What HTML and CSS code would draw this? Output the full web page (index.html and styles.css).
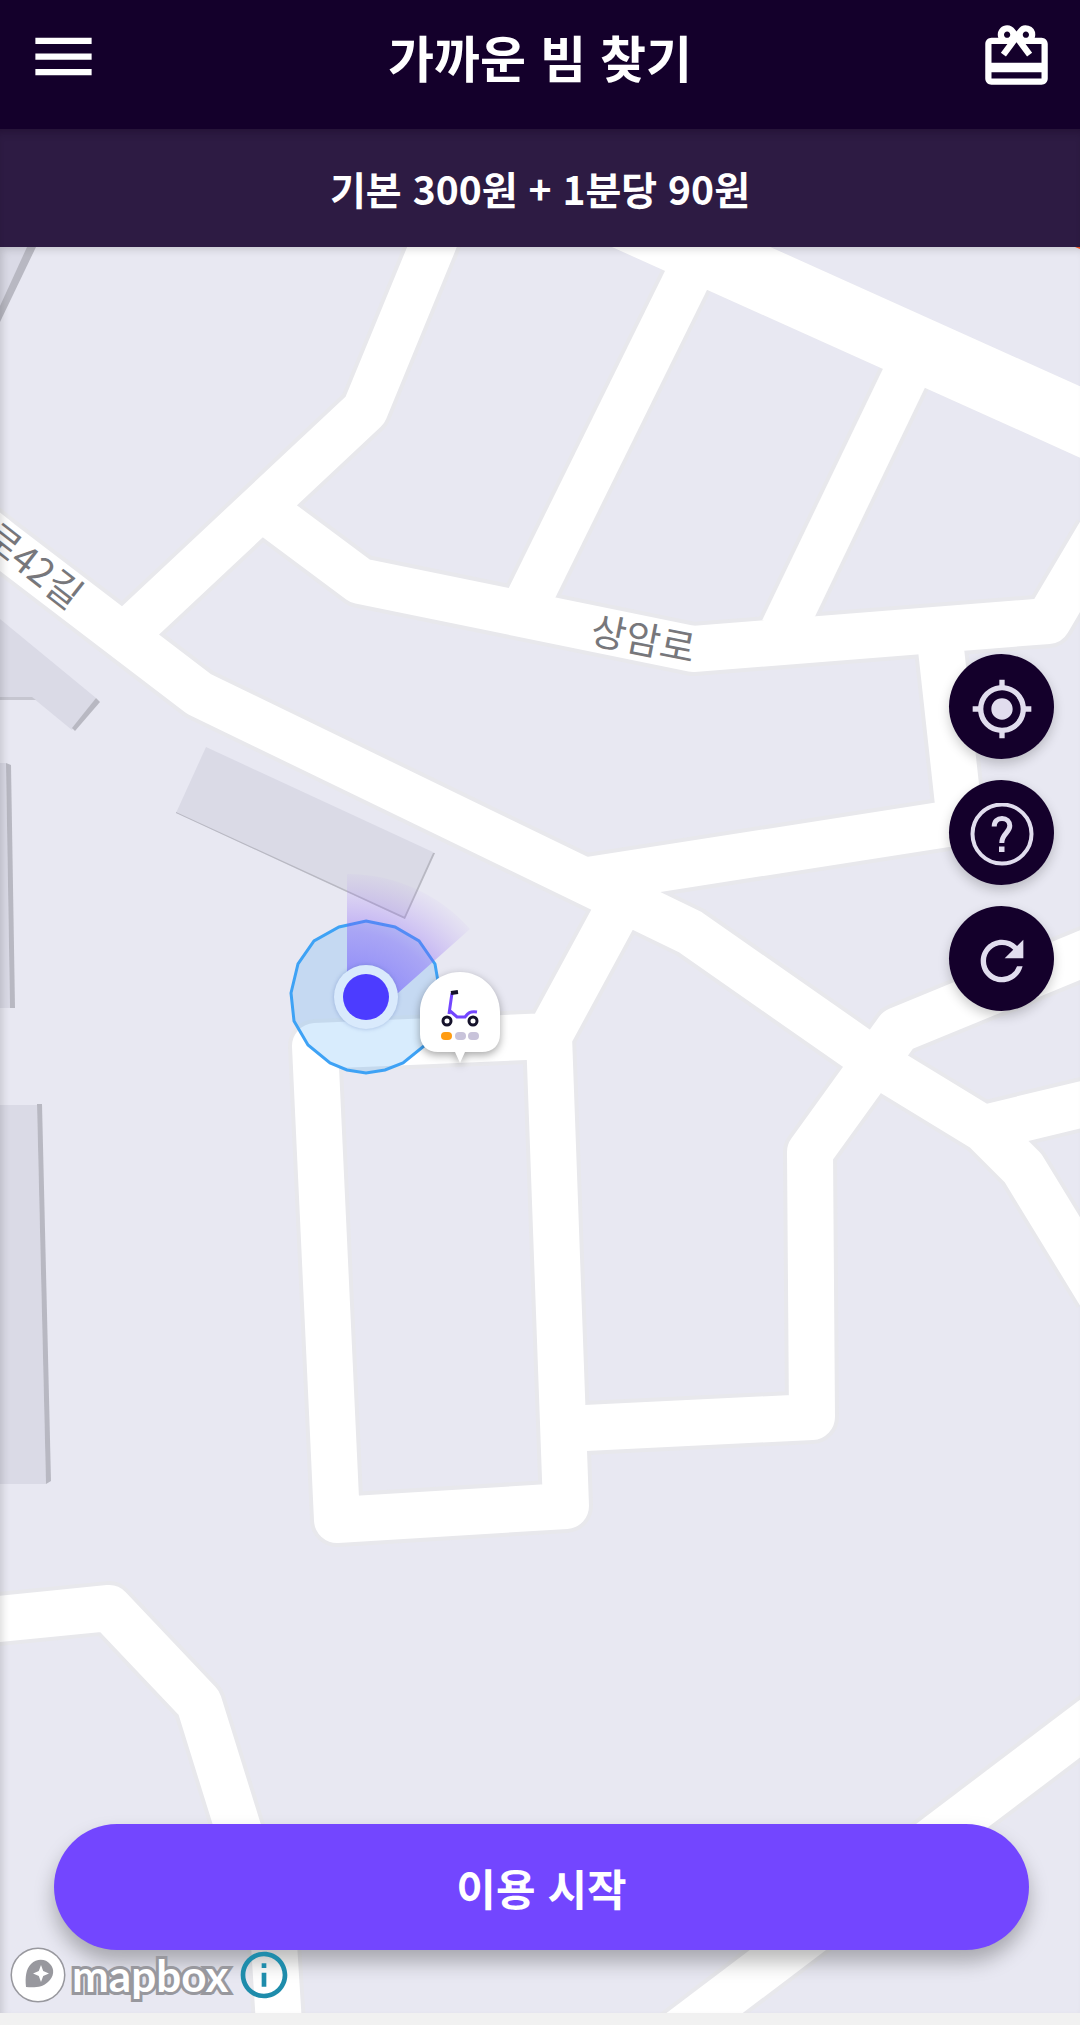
FILE: index.html
```
<!DOCTYPE html>
<html lang="ko">
  <head>
    <title>가까운 빔 찾기</title>
    <meta charset="utf-8" />
    <meta name="viewport" content="width=device-width, initial-scale=1" />
    <link rel="stylesheet" href="styles.css">
  </head>
  <body>
    <header class="topbar">
      <button class="icon-button" aria-label="메뉴">
        <svg viewBox="0 0 24 24"><path d="M3 18h18v-2H3v2zm0-5h18v-2H3v2zm0-7v2h18V6H3z" /></svg>
      </button>
      <h1 class="title">가까운 빔 찾기</h1>
      <button class="icon-button" aria-label="선물">
        <svg viewBox="0 0 24 24"><path d="M20 6h-2.18c.11-.31.18-.65.18-1a2.996 2.996 0 0 0-5.5-1.65l-.5.67-.5-.68C10.96 2.54 10.05 2 9 2 7.34 2 6 3.34 6 5c0 .35.07.69.18 1H4c-1.11 0-1.99.89-1.99 2L2 19c0 1.11.89 2 2 2h16c1.11 0 2-.89 2-2V8c0-1.11-.89-2-2-2zm-5-2c.55 0 1 .45 1 1s-.45 1-1 1-1-.45-1-1 .45-1 1-1zM9 4c.55 0 1 .45 1 1s-.45 1-1 1-1-.45-1-1 .45-1 1-1zm11 15H4v-2h16v2zm0-5H4V8h5.08L7 10.83 8.62 12 11 8.76l1-1.36 1 1.36L15.38 12 17 10.83 14.92 8H20v6z" /></svg>
      </button>
    </header>

    <p class="price">기본 300원 + 1분당 90원</p>

    <main class="map">
      <svg class="map-canvas" viewBox="0 247 1080 1766" preserveAspectRatio="xMidYMid slice">
        <defs>
          <radialGradient id="heading" gradientUnits="userSpaceOnUse" cx="347" cy="1038" r="164">
            <stop offset="0.3" stop-color="#5a46ff" stop-opacity="0.55" />
            <stop offset="0.65" stop-color="#7a50fa" stop-opacity="0.38" />
            <stop offset="1" stop-color="#a06ef0" stop-opacity="0.04" />
          </radialGradient>
          <g id="roads">
            <path class="wide" d="M560 188L1120 440" />
            <path d="M-30 518L0 542L199 694L690 932L889 1071L984 1129L1023 1168L1100 1294" />
            <path d="M440 227L432 247L365 410L126 634" />
            <path d="M262 508L360 581L693 649L1048 621L1100 533" />
            <path d="M700 252L526 605" />
            <path d="M918 349L783 630" />
            <path d="M940 640L960 822L582 881" />
            <path d="M620 905L549 1036L315 1046L337 1520L566 1506L549 1036" />
            <path d="M565 1429L812 1417L810 1152L898 1030L1100 947" />
            <path d="M984 1128L1100 1100" />
            <path d="M-20 1621L109 1608L199 1703L274 1944L280 2040" />
            <path d="M665 2043L1106 1709" />
          </g>
        </defs>

        <use href="#roads" class="road-casing" />
        <use href="#roads" class="road" />

        <!-- buildings -->
        <g class="building">
          <path d="M0 247H28L0 308Z" />
          <path d="M0 619L96 698L72 730L33 698H0Z" />
          <path d="M206 747L435 853L405 919L176 813Z" />
          <path d="M0 763H6L10 1008H0Z" />
          <path d="M0 1105H37L46 1484H0Z" />
        </g>
        <g class="wall">
          <path d="M27 247H36L0 322V306Z" />
          <path d="M96 698L100 702L75 731L72 728Z" />
          <path d="M6 763L11 765L15 1008H10Z" />
          <path d="M37 1104H42L51 1481L46 1484Z" />
          <path class="thin" d="M0 697H32L36 700H0Z" />
          <path d="M435 853L405 919L404 917L433 853Z" />
          <path d="M405 919L176 813L176 812L405 917Z" />
        </g>

        <path class="poi" d="M1075 247H1080V249Z" />

        <text class="road-name" text-anchor="end" transform="translate(69 611) rotate(38)">로42길</text>
        <text class="road-name" transform="translate(589 643) rotate(11)">상암로</text>

        <!-- current location -->
        <path class="accuracy" d="M366 921L395 927L419 941L435 964L440 993L437 1021L424 1046L403 1063L385 1070L366 1073L347 1070L330 1063L308 1045L294 1021L291 993L298 964L314 941L339 927Z" />
        <path fill="url(#heading)" d="M347 874A164 164 0 0 1 470 929L398 993L366 1000L347 980Z" />
        <circle class="dot-ring" cx="366" cy="997" r="32" />
        <circle class="dot" cx="366" cy="997" r="23" />

        <!-- scooter pin -->
        <g class="pin">
          <path d="M420 1012C420 990 438 972 460 972S500 990 500 1012V1034C500 1045 493 1052 482 1052H465L460 1063L455 1052H438C427 1052 420 1045 420 1034Z" />
        </g>
        <g class="scooter">
          <path class="frame" d="M452 993L449 1014M449 1010L457 1017H465C468 1013 470 1011 477 1012" />
          <path class="grip" d="M451 993L458 992" />
          <circle cx="447" cy="1021" r="4" />
          <circle cx="473" cy="1021" r="4" />
        </g>
        <rect class="battery full" x="441" y="1032" width="11" height="8" rx="4" />
        <rect class="battery" x="455" y="1032" width="11" height="8" rx="4" />
        <rect class="battery" x="468" y="1032" width="11" height="8" rx="4" />
      </svg>

      <div class="map-controls">
        <button class="fab" aria-label="현재 위치">
          <svg viewBox="0 0 24 24"><path d="M12 8c-2.21 0-4 1.79-4 4s1.79 4 4 4 4-1.79 4-4-1.79-4-4-4zm8.94 3A8.994 8.994 0 0 0 13 3.06V1h-2v2.06A8.994 8.994 0 0 0 3.06 11H1v2h2.06A8.994 8.994 0 0 0 11 20.94V23h2v-2.06A8.994 8.994 0 0 0 20.94 13H23v-2h-2.06zM12 19c-3.87 0-7-3.13-7-7s3.13-7 7-7 7 3.13 7 7-3.13 7-7 7z" /></svg>
        </button>
        <button class="fab" aria-label="도움말">
          <svg viewBox="0 0 64 64">
            <circle class="line" cx="32" cy="31" r="29.5" />
            <path class="line mark" d="M24.200 23.500C24.200 18.500 27.500 15.400 32 15.400C36.600 15.400 39.800 18.500 39.800 22.800C39.800 29.800 31.800 30.500 31.800 40" />
            <path d="M29 43.500h5.500v5.500H29z" />
          </svg>
        </button>
        <button class="fab" aria-label="새로고침">
          <svg viewBox="0 0 24 24"><path d="M17.65 6.35A7.958 7.958 0 0 0 12 4c-4.42 0-7.99 3.58-7.99 8s3.57 8 7.99 8c3.73 0 6.84-2.55 7.73-6h-2.08A5.99 5.99 0 0 1 12 18c-3.31 0-6-2.69-6-6s2.69-6 6-6c1.66 0 3.14.69 4.22 1.78L13 11h7V4l-2.35 2.35z" /></svg>
        </button>
      </div>

      <button class="start-button">이용 시작</button>

      <div class="attribution">
        <a class="mapbox" href="https://www.mapbox.com/">
          <svg viewBox="0 0 56 56">
            <circle class="badge" cx="28" cy="28" r="26" />
            <path class="leaf" d="M16 40C15 30 16 22 21 17C27 11 36 12 40 17C45 22 44 30 38 35C33 40 25 41 16 40Z" />
            <path class="star" d="M31 18L33.200 24L39 26.500L33.200 29L31 35L28.800 29L23 26.500L28.800 24Z" />
          </svg>
          <span>mapbox</span>
        </a>
        <button class="info-button" aria-label="지도 정보">
          <svg viewBox="0 0 24 24"><path d="M11 7h2v2h-2zm0 4h2v6h-2zm1-9C6.480 2 2 6.480 2 12s4.480 10 10 10 10-4.480 10-10S17.520 2 12 2zm0 18c-4.410 0-8-3.590-8-8s3.590-8 8-8 8 3.590 8 8-3.590 8-8 8z" /></svg>
        </button>
      </div>
    </main>
  </body>
</html>
```

FILE: styles.css
```
* {
  box-sizing: border-box;
}

body {
  display: flex;
  flex-direction: column;
  min-height: 100vh;
  margin: 0;
  padding-bottom: 12px;
  font-family: "Noto Sans CJK KR", sans-serif;
  color: #fff;
  background-color: #f1f1f1;
}

button {
  padding: 0;
  border: none;
  background: none;
  color: inherit;
  font-family: inherit;
  cursor: pointer;
}

svg {
  display: block;
}

.topbar {
  display: flex;
  align-items: center;
  justify-content: space-between;
  padding: 19px 26px 35px;
  background-color: #14002b;
}

.icon-button svg {
  width: 75px;
  height: 75px;
  fill: #fff;
}

.title {
  margin: 0;
  font-size: 50px;
  font-weight: 700;
  line-height: 75px;
}

.price {
  margin: 0;
  padding: 29px 26px;
  background-color: #2d1b43;
  box-shadow: inset 0 8px 10px -6px rgba(20, 0, 30, 0.4);
  font-size: 39px;
  font-weight: 700;
  line-height: 60px;
  text-align: center;
}

.map {
  position: relative;
  flex: 1;
  min-height: 1000px;
  overflow: hidden;
  background-color: #e8e8f2;
}

/* soft edge under the price bar and along the left side */
.map::after {
  content: "";
  position: absolute;
  inset: 0;
  box-shadow: inset 4px 4px 8px -2px rgba(0, 0, 0, 0.16);
  pointer-events: none;
}

.map-canvas {
  position: absolute;
  width: 100%;
  height: 100%;
}

.road,
.road-casing {
  fill: none;
  stroke: #fff;
  stroke-width: 46px;
  stroke-linecap: butt;
  stroke-linejoin: round;
}

.road-casing {
  stroke: #e8e8ec;
  stroke-width: 54px;
}

.wide {
  stroke-width: 65px;
}

.building {
  fill: #dadae6;
}

.wall {
  fill: #b8b8c2;
}

.wall .thin {
  fill: #c6c6d0;
}

.poi {
  fill: #ff5722;
}

.road-name {
  fill: #77777b;
  font-size: 38px;
  font-weight: 400;
}

.accuracy {
  fill: rgba(62, 160, 245, 0.2);
  stroke: #3ea2f5;
  stroke-width: 3px;
}

.dot-ring {
  fill: #d9eafc;
  filter: drop-shadow(0 0 2px rgba(80, 110, 180, 0.4));
}

.dot {
  fill: #4c3cff;
}

.pin {
  fill: #fff;
  filter: drop-shadow(0 3px 4px rgba(0, 0, 0, 0.35));
}

.scooter {
  fill: none;
  stroke: #15122b;
  stroke-width: 3px;
}

.scooter .frame {
  stroke: #7346ff;
}

.scooter .grip {
  stroke-width: 4px;
}

.battery {
  fill: #c8c3da;
}

.battery.full {
  fill: #ff9c12;
}

.map-controls {
  position: absolute;
  top: 407px;
  right: 26px;
  display: flex;
  flex-direction: column;
  gap: 21px;
}

.fab {
  display: flex;
  align-items: center;
  justify-content: center;
  width: 105px;
  height: 105px;
  padding-top: 4px;
  border-radius: 50%;
  background-color: #14002b;
  box-shadow: 0 5px 12px rgba(0, 0, 0, 0.2);
}

.fab svg {
  width: 64px;
  height: 64px;
  fill: #e1ddee;
}

.fab .line {
  fill: none;
  stroke: #e1ddee;
  stroke-width: 4px;
}

.fab .mark {
  stroke-width: 5px;
}

.start-button {
  position: absolute;
  right: 51px;
  bottom: 63px;
  left: 54px;
  height: 126px;
  border-radius: 63px;
  background-color: #7346ff;
  box-shadow: 0 12px 20px rgba(0, 0, 0, 0.28);
  font-size: 43px;
  font-weight: 700;
}

.attribution {
  position: absolute;
  bottom: 10px;
  left: 10px;
  display: flex;
  align-items: center;
  gap: 8px;
}

.mapbox {
  display: flex;
  align-items: center;
  gap: 6px;
  color: #fff;
  font-family: Lato, sans-serif;
  font-size: 44px;
  font-weight: 700;
  line-height: 56px;
  text-decoration: none;
  -webkit-text-stroke: 6px #98989e;
  paint-order: stroke fill;
}

.mapbox svg {
  width: 56px;
  height: 56px;
}

.badge {
  fill: #fff;
  stroke: #98989e;
  stroke-width: 3px;
}

.leaf {
  fill: #98989e;
}

.star {
  fill: #fff;
}

.info-button svg {
  width: 56px;
  height: 56px;
  fill: #1e8cab;
}
```
